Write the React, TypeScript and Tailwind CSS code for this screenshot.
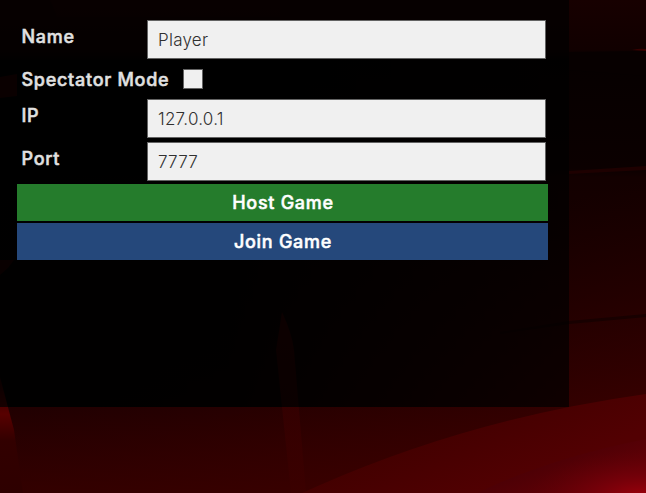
import type { ReactNode } from "react";

function Backdrop() {
  return (
    <svg className="absolute inset-0 h-full w-full" viewBox="0 0 646 493" preserveAspectRatio="none" aria-hidden="true">
      <defs>
        <linearGradient id="base" x1="0" y1="0" x2="0" y2="1">
          <stop offset="0" stopColor="#170000" />
          <stop offset="0.1" stopColor="#110000" />
          <stop offset="0.12" stopColor="#060000" />
          <stop offset="0.34" stopColor="#0b0000" />
          <stop offset="0.36" stopColor="#130000" />
          <stop offset="0.62" stopColor="#1a0000" />
          <stop offset="0.83" stopColor="#1e0001" />
          <stop offset="1" stopColor="#340000" />
        </linearGradient>
        <linearGradient id="right" gradientUnits="userSpaceOnUse" x1="420" y1="240" x2="480" y2="460">
          <stop offset="0" stopColor="#250000" stopOpacity="0" />
          <stop offset="1" stopColor="#3a0000" stopOpacity="0.95" />
        </linearGradient>
        <linearGradient id="shade" x1="0" y1="0" x2="1" y2="0">
          <stop offset="0" stopColor="#000" stopOpacity="0.85" />
          <stop offset="0.4" stopColor="#000" stopOpacity="0.8" />
          <stop offset="1" stopColor="#000" stopOpacity="0" />
        </linearGradient>
        <linearGradient id="sweep" gradientUnits="userSpaceOnUse" x1="460" y1="400" x2="500" y2="493">
          <stop offset="0" stopColor="#400000" />
          <stop offset="1" stopColor="#520002" />
        </linearGradient>
        <linearGradient id="inner" gradientUnits="userSpaceOnUse" x1="560" y1="445" x2="580" y2="493">
          <stop offset="0" stopColor="#480005" />
          <stop offset="1" stopColor="#600006" />
        </linearGradient>
        <radialGradient id="glow" gradientUnits="userSpaceOnUse" cx="646" cy="500" r="120" gradientTransform="translate(646 500) scale(1 .42) translate(-646 -500)">
          <stop offset="0" stopColor="#a8000c" />
          <stop offset="0.5" stopColor="#7a000a" stopOpacity="0.65" />
          <stop offset="1" stopColor="#600006" stopOpacity="0" />
        </radialGradient>
        <linearGradient id="edge" x1="0" y1="0" x2="0" y2="1">
          <stop offset="0" stopColor="#200000" />
          <stop offset="0.32" stopColor="#580000" />
          <stop offset="0.55" stopColor="#320000" />
          <stop offset="1" stopColor="#2e0000" />
        </linearGradient>
        <linearGradient id="streak" x1="0" y1="0" x2="0" y2="1">
          <stop offset="0" stopColor="#4c0000" stopOpacity="0.5" />
          <stop offset="1" stopColor="#400000" stopOpacity="0.3" />
        </linearGradient>
      </defs>
      <rect width="646" height="493" fill="url(#base)" />
      <rect y="170" width="646" height="323" fill="url(#right)" />
      <rect y="60" width="569" height="347" fill="url(#shade)" />
      <path d="M50 0H280V17H57Z" fill="#200000" opacity=".5" />
      <path d="M0 77L17 74V96L0 98Z" fill="#240000" />
      <path d="M569 52L646 51V76L569 70Z" fill="#070000" />
      <path d="M632 50Q640 48 646 49V51Z" fill="#370000" />
      <path d="M569 171L646 166V170L569 174Z" fill="#1e0000" />
      <path d="M0 260H14L8 268L0 275Z" fill="#200000" />
      <path d="M0 377L14 430L23 493H0Z" fill="url(#edge)" />
      <path d="M282 312Q292 333 294 350L306 493H291L276 350Z" fill="url(#streak)" />
      <path d="M500 332L569 321L646 314V317L569 324L500 334Z" fill="#180000" />
      <path d="M320 485Q473 418 646 394V493H302Z" fill="url(#sweep)" />
      <path d="M490 487Q560 456 646 439V493H478Z" fill="url(#inner)" />
      <rect x="450" y="390" width="196" height="103" fill="url(#glow)" />
    </svg>
  );
}

function Label({ children, htmlFor }: { children: ReactNode; htmlFor: string }) {
  return (
    <label htmlFor={htmlFor} className="block shrink-0 whitespace-nowrap text-[18px] leading-[22px] font-medium tracking-[0.72px] text-[#e1e1e1] [-webkit-text-stroke:0.5px_#e1e1e1]">
      {children}
    </label>
  );
}

function Field({ id, label, value }: { id: string; label: string; value: string }) {
  return (
    <div className="flex h-[39px] w-[524.5px] items-start justify-between">
      <div className="pt-[6px]">
        <Label htmlFor={id}>{label}</Label>
      </div>
      <input
        id={id}
        defaultValue={value}
        className="h-[39px] w-[399px] rounded-none border border-[#636363] bg-[#f0f0f0] px-[10px] text-[17px] font-light tracking-[0.25px] text-[#303030] outline-none"
      />
    </div>
  );
}

export default function App() {
  return (
    <main className="relative h-[493px] w-[646px] overflow-hidden bg-black font-['Inter',sans-serif]">
      <Backdrop />
      <section className="relative h-[407px] w-[569px] bg-black/70 pt-[20px] pl-[17px]">
        <div className="flex flex-col pl-[4.5px]">
          <Field id="name" label="Name" value="Player" />
          <div className="mt-[10px] mb-[10px] flex h-5 items-start">
            <div className="w-[161.5px]">
              <Label htmlFor="spectator">Spectator Mode</Label>
            </div>
            <input id="spectator" type="checkbox" className="size-5 appearance-none border border-[#636363] bg-[#f0f0f0]" />
          </div>
          <div className="flex flex-col gap-1">
            <Field id="ip" label="IP" value="127.0.0.1" />
            <Field id="port" label="Port" value="7777" />
          </div>
        </div>
        <div className="mt-[3px] flex w-[531px] flex-col gap-[2px] text-[18px] leading-[22px] font-medium tracking-[0.72px] text-white [-webkit-text-stroke:0.5px_#fff]">
          <button className="h-[37px] bg-[#257c2c] pl-px">Host Game</button>
          <button className="h-[37px] bg-[#25487b] pl-px">Join Game</button>
        </div>
      </section>
    </main>
  );
}
